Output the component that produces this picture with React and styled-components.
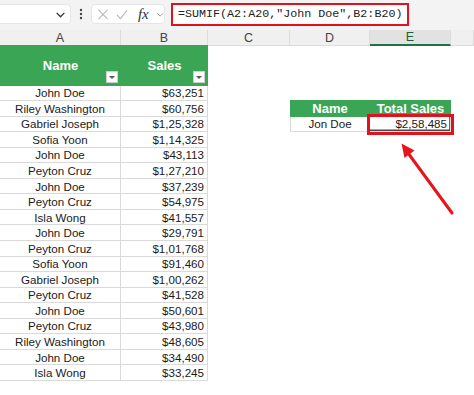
import React from "react";
import styled, { createGlobalStyle } from "styled-components";

const GlobalStyle = createGlobalStyle`
  html, body { margin: 0; padding: 0; background: #ffffff; }
  body { font-family: "Liberation Sans", Arial, sans-serif; }
  * { box-sizing: border-box; }
`;

const ROW_H = 15.55;
const GREEN = "#3aa655";

const Root = styled.div`
  position: relative;
  width: 474px;
  height: 395px;
  overflow: hidden;
  background: #ffffff;
`;

const FormulaBar = styled.div`
  display: flex;
  align-items: center;
  height: 28px;
  background: #f3f3f3;
`;

const NameBox = styled.div`
  width: 71px;
  height: 20px;
  background: #ffffff;
  border: 1px solid #e6e6e6;
  border-left: none;
  border-radius: 0 4px 4px 0;
  display: flex;
  align-items: center;
  justify-content: flex-end;
  padding-right: 4px;
`;

const Dots = styled.div`
  width: 20px;
  display: flex;
  justify-content: center;
  align-items: center;
`;

const IconBox = styled.div`
  width: 74px;
  height: 20px;
  background: #ffffff;
  border: 1px solid #e6e6e6;
  border-radius: 4px;
  display: flex;
  align-items: center;
  padding-left: 5px;
  gap: 7px;
`;

const Fx = styled.span`
  font-family: "Liberation Serif", "Times New Roman", serif;
  font-style: italic;
  font-size: 15px;
  color: #333;
  margin-left: 3px;
  line-height: 1;
`;

const FormulaInput = styled.div`
  margin-left: 6px;
  width: 238px;
  height: 23px;
  border: 2.5px solid #e0121c;
  background: #ffffff;
  display: flex;
  align-items: center;
  padding-left: 5px;
  font-family: "Liberation Mono", "DejaVu Sans Mono", monospace;
  font-size: 11.7px;
  color: #222;
  white-space: nowrap;
`;

const ColumnHeaders = styled.div`
  display: grid;
  grid-template-columns: 121px 87px 82px 80px 81px 1fr;
  height: 17px;
  background: #f0f0f0;
  border-top: 2px solid #f3f3f3;
`;

const ColHeader = styled.div`
  display: flex;
  align-items: center;
  justify-content: center;
  font-size: 12.5px;
  color: ${(p) => (p.$active ? "#1f5f3a" : "#444")};
  background: ${(p) => (p.$active ? "#e2e2e2" : "transparent")};
  border-right: 1px solid #dcdcdc;
  border-bottom: ${(p) => (p.$active ? "2px solid #217346" : "1px solid #dcdcdc")};
`;

const Sheet = styled.div`
  display: flex;
  align-items: flex-start;
`;

const DataTable = styled.div`
  display: grid;
  grid-template-columns: 121px 87px;
  width: 208px;
`;

const HeadCell = styled.div`
  position: relative;
  height: ${(p) => p.$h}px;
  background: ${GREEN};
  color: #ffffff;
  font-weight: bold;
  font-size: 13px;
  display: flex;
  align-items: center;
  justify-content: center;
`;

const FilterButton = styled.div`
  position: absolute;
  right: 3px;
  bottom: 3px;
  width: 12px;
  height: 12px;
  background: #ffffff;
  border: 1px solid #cfcfcf;
  display: flex;
  align-items: center;
  justify-content: center;
  &::after {
    content: "";
    border-left: 3px solid transparent;
    border-right: 3px solid transparent;
    border-top: 3px solid #555;
    margin-top: 1px;
  }
`;

const Cell = styled.div`
  height: ${ROW_H}px;
  font-size: 11.6px;
  color: #1a1a1a;
  display: flex;
  align-items: center;
  justify-content: ${(p) => (p.$right ? "flex-end" : "center")};
  padding-right: ${(p) => (p.$right ? "3px" : "0")};
  border-bottom: 1px solid #dadada;
  border-right: 1px solid #dadada;
  border-left: ${(p) => (p.$left ? "1px solid #dadada" : "none")};
  white-space: nowrap;
  outline: ${(p) => (p.$marked ? "3px solid #e0121c" : "none")};
  box-shadow: ${(p) => (p.$marked ? "inset 0 -1.5px 0 #4a4a4a, inset -1px 0 0 #6a6a6a" : "none")};
  position: relative;
  z-index: ${(p) => (p.$marked ? 1 : 0)};
`;

const SummaryTable = styled.div`
  display: grid;
  grid-template-columns: 80px 81px;
  margin-left: 82px;
  margin-top: 55px;
`;

const Overlay = styled.svg`
  position: absolute;
  left: 0;
  top: 0;
  width: 474px;
  height: 395px;
  pointer-events: none;
`;

const rows = [
  ["John Doe", "$63,251"],
  ["Riley Washington", "$60,756"],
  ["Gabriel Joseph", "$1,25,328"],
  ["Sofia Yoon", "$1,14,325"],
  ["John Doe", "$43,113"],
  ["Peyton Cruz", "$1,27,210"],
  ["John Doe", "$37,239"],
  ["Peyton Cruz", "$54,975"],
  ["Isla Wong", "$41,557"],
  ["John Doe", "$29,791"],
  ["Peyton Cruz", "$1,01,768"],
  ["Sofia Yoon", "$91,460"],
  ["Gabriel Joseph", "$1,00,262"],
  ["Peyton Cruz", "$41,528"],
  ["John Doe", "$50,601"],
  ["Peyton Cruz", "$43,980"],
  ["Riley Washington", "$48,605"],
  ["John Doe", "$34,490"],
  ["Isla Wong", "$33,245"],
];

const Chevron = ({ color = "#444", size = 10 }) => (
  <svg width={size} height={size} viewBox="0 0 10 10">
    <path d="M1.5 3.5 L5 7 L8.5 3.5" fill="none" stroke={color} strokeWidth="1.2" />
  </svg>
);

export default function App() {
  return (
    <Root>
      <GlobalStyle />
      <FormulaBar>
        <NameBox>
          <Chevron color="#333" size={11} />
        </NameBox>
        <Dots>
          <svg width="4" height="12" viewBox="0 0 4 12">
            <circle cx="2" cy="2" r="1.2" fill="#444" />
            <circle cx="2" cy="6" r="1.2" fill="#444" />
            <circle cx="2" cy="10" r="1.2" fill="#444" />
          </svg>
        </Dots>
        <IconBox>
          <svg width="13" height="13" viewBox="0 0 13 13">
            <path d="M1.5 1.5 L11.5 11.5 M11.5 1.5 L1.5 11.5" stroke="#b5b5b5" strokeWidth="1.1" fill="none" />
          </svg>
          <svg width="13" height="13" viewBox="0 0 13 13">
            <path d="M1 7 L4.8 11 L12 2" stroke="#b5b5b5" strokeWidth="1.1" fill="none" />
          </svg>
          <Fx>fx</Fx>
          <Chevron color="#999" size={9} />
        </IconBox>
        <FormulaInput>=SUMIF(A2:A20,"John Doe",B2:B20)</FormulaInput>
      </FormulaBar>

      <ColumnHeaders>
        <ColHeader>A</ColHeader>
        <ColHeader>B</ColHeader>
        <ColHeader>C</ColHeader>
        <ColHeader>D</ColHeader>
        <ColHeader $active>E</ColHeader>
        <ColHeader />
      </ColumnHeaders>

      <Sheet>
        <DataTable>
          <HeadCell $h={40.5}>
            Name
            <FilterButton />
          </HeadCell>
          <HeadCell $h={40.5}>
            Sales
            <FilterButton />
          </HeadCell>
          {rows.map(([name, sales], i) => (
            <React.Fragment key={i}>
              <Cell>{name}</Cell>
              <Cell $right>{sales}</Cell>
            </React.Fragment>
          ))}
        </DataTable>

        <SummaryTable>
          <HeadCell $h={ROW_H + 1}>Name</HeadCell>
          <HeadCell $h={ROW_H + 1}>Total Sales</HeadCell>
          <Cell $left>Jon Doe</Cell>
          <Cell $right $marked>$2,58,485</Cell>
        </SummaryTable>
      </Sheet>

      <Overlay viewBox="0 0 474 395">
        <line x1="452" y1="213" x2="408" y2="153" stroke="#e8141c" strokeWidth="3" strokeLinecap="round" />
        <polygon points="401.5,143.5 414.5,150.5 404.5,158" fill="#e8141c" />
      </Overlay>
    </Root>
  );
}
